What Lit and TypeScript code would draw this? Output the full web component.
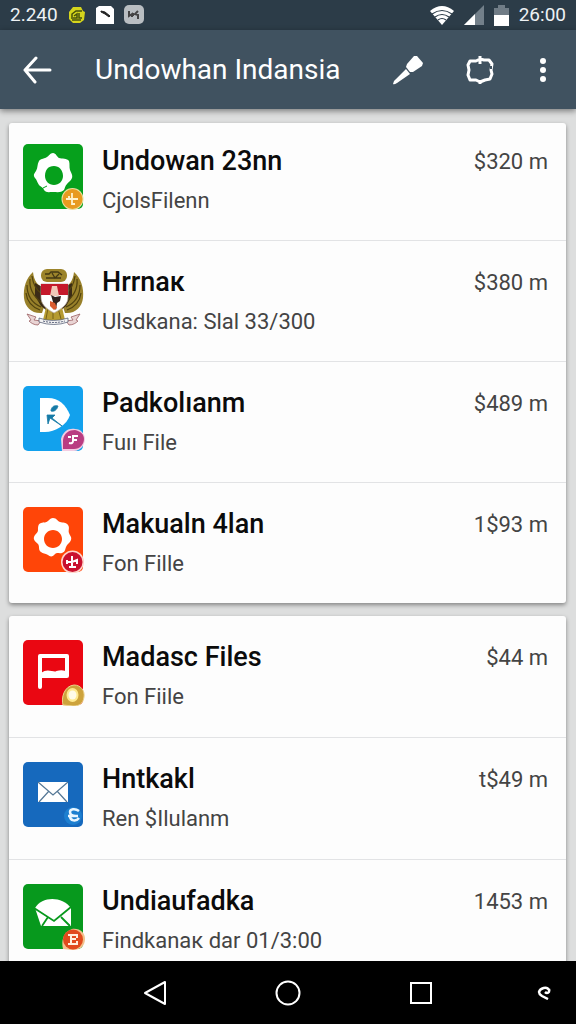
import { LitElement, html, svg, css } from "lit";
import { customElement, property } from "lit/decorators.js";

interface Item {
  icon: string;
  title: string;
  detail: string;
  amount: string;
}

const RECENT: Item[] = [
  { icon: "flower", title: "Undowan 23nn", detail: "CjolsFilenn", amount: "$320 m" },
  { icon: "emblem", title: "Hrrnaк", detail: "Ulsdkana: Slal 33/300", amount: "$380 m" },
  { icon: "play", title: "Padkolıanm", detail: "Fuıı File", amount: "$489 m" },
  { icon: "gear", title: "Makualn 4lan", detail: "Fon Fille", amount: "1$93 m" },
];

const FILES: Item[] = [
  { icon: "flag", title: "Madasc Files", detail: "Fon Fiile", amount: "$44 m" },
  { icon: "mail", title: "Hntkakl", detail: "Ren $Ilulanm", amount: "t$49 m" },
  { icon: "open-mail", title: "Undiaufadka", detail: "Findkanaк dar 01/3:00", amount: "1453 m" },
];

const tile = (fill: string) => svg`<rect width="60" height="65" rx="5" fill=${fill} />`;

const wing = svg`
  <path d="M10 4C3 10 0 20 1 30c1 9 8 16 18 15l3-9-2-17c-5-1-9-6-10-15z" fill="#98802a" />
  <path d="M12 15l9 5 2 22-5-4-6-10z" fill="#3b2b17" />
  <path d="M7 11c-1 10 4 18 12 24M4 17c0 10 5 18 14 22M3 25c1 8 6 14 14 17M9 8c1 8 4 14 10 18" fill="none" stroke="#51420f" stroke-width="1.2" />
  <path d="M4 46l9 3-2 3 7 1-3 4c-4 0-7-2-9-4l2-1z" fill="#e9d4d4" stroke="#9b6062" stroke-width=".8" />`;

const ART: Record<string, unknown> = {
  flower: svg`${tile("#06a01c")}
    <path d="M30 9C33 9 34 13 36 14C39 15 44 14 46 17C47 20 46 23 47 26C48 29 50 31 49 34C48 37 45 38 44 40C42 42 42 44 41 46C38 49 34 48 30 48C26 48 23 49 21 46C20 43 18 43 16 41C14 38 14 36 12 34C10 31 11 30 13 27C15 24 14 20 16 17C18 14 22 15 24 13C26 12 27 9 30 9zM31 22C25 22 22 26 22 32C22 37 26 41 31 41C36 41 40 37 40 32C40 26 36 22 31 22z" fill="#fff" fill-rule="evenodd" />
    <path d="M20 44l4-2" fill="none" stroke="#06a01c" />
    <circle cx="49.500" cy="55" r="11" fill="#eadf9f" /><circle cx="49.500" cy="55" r="10" fill="#e89b20" />
    <path d="M49 49v11h3M43 55h12M46 52v3" fill="none" stroke="#fff3cd" stroke-width="1.800" />`,
  emblem: svg`<g transform="translate(0 3)">${wing}<g transform="translate(61 0) scale(-1 1)">${wing}</g>
    <path d="M24 35h14l4 17H20z" fill="#b69b32" />
    <path d="M25 40l-2 11M30 41v10M35 40l3 11" stroke="#756018" />
    <rect x="18" y="1" width="26" height="13" rx="6" fill="#9c842b" />
    <path d="M22 6h4l2-2h7l4 3M23 10h15M29 5l3 5 4-4" fill="none" stroke="#443914" stroke-width="1.300" />
    <path d="M18 16h27v13c0 7-5 11-14 16-9-5-13-9-13-16z" fill="#fff" stroke="#b9aaa0" stroke-width=".7" />
    <path d="M18 16h27v11H18z" fill="#c5192b" />
    <path d="M29 18h5l2 10h-9z" fill="#f2c8b9" /><path d="M28 27l4 2 6-1-1 5-3 2-1 7-3-4-3-1 3-3z" fill="#30211e" />
    <path d="M27 33l5 2 2 5-3 2-4-4z" fill="#d95b31" />
    <path d="M16 50q14 5 29 0v4q-14 5-29 0z" fill="#f4f4f4" stroke="#46506a" stroke-width=".7" />
    <path d="M20 53q11 3 22 0" fill="none" stroke="#59617b" stroke-dasharray="2 1" /></g>`,
  play: svg`${tile("#12a1ed")}
    <path d="M17 12h8c11 0 18 7 22 17-3 10-15 17-25 17h-5z" fill="#fff" />
    <path d="M24 29h8l-3 3 10 8-12-8-2 6zM28 24c1-4 4-5 7-4-1 4-4 6-7 5z" fill="#167ba7" stroke="#167ba7" stroke-width=".8" />
    <path d="M38 53c2-8 8-11 14-10 6 0 10 5 10 10s-4 12-11 12H39z" fill="#f3cce2" />
    <path d="M40 54c1-7 6-10 12-10 5 1 9 4 9 9s-4 10-10 10H40z" fill="#b93d82" />
    <path d="M55 50h-5v5q0 3-4 2M45 51h3M50 54h4" fill="none" stroke="#fff" stroke-width="2" />`,
  gear: svg`${tile("#ff4508")}
    <path d="M30 11c4 0 4 3 7 4s6 0 8 3 0 5 1 8 3 4 2 7-4 4-5 7-1 5-4 6-5-1-7 1c-2 3-5 3-7 1-3-2-5-1-7-3-3-2-1-5-3-8-2-2-5-4-4-7s4-4 4-7 0-6 3-7 5 0 7-2 3-3 5-3zm0 12c-5 0-9 4-9 9s4 9 9 9 9-4 9-9-4-9-9-9z" fill="#fff" fill-rule="evenodd" />
    <circle cx="49.500" cy="55" r="11.500" fill="#ffd3ca" /><circle cx="49.500" cy="55" r="10" fill="#c9112f" />
    <path d="M49 49v10M46 60h7M44 53v4M44 55h5l5-2v4" fill="none" stroke="#fff" stroke-width="2" />`,
  flag: svg`${tile("#ea0712")}
    <path d="M17 47V16h27v20H19M20 34c5-4 10 1 14-1 3-1 6-2 9 1" fill="none" stroke="#fff" stroke-width="4" stroke-linejoin="round" stroke-linecap="round" />
    <path d="M40 65c-2-7 1-19 11-20 7 0 11 6 10 12-1 7-5 9-11 9z" fill="#cda33c" stroke="#ecd18b" />
    <ellipse cx="49.500" cy="55" rx="6" ry="7" fill="#ffe98e" /><ellipse cx="49.500" cy="55" rx="4" ry="4.500" fill="#fffbe8" />`,
  mail: svg`${tile("#1669bd")}
    <path d="M15 20h30v20H15z" fill="#fff" />
    <path d="M15 20l15 13 15-13M16 40l10-11M44 40L34 29" fill="none" stroke="#547795" stroke-width="1.200" />
    <circle cx="50" cy="54" r="9" fill="#1d7fd0" />
    <path d="M56 49c-4-3-9-2-9 1s2 4 6 4M45 54h10M47 54c0 5 6 6 9 2" fill="none" stroke="#eaf6ff" stroke-width="2.500" />`,
  "open-mail": svg`${tile("#07991d")}
    <path d="M12 24c7-12 27-12 36 0v18H18z" fill="#fff" />
    <path d="M11 24l20 13 17-14M19 42l6-9M47 42l-9-9" fill="none" stroke="#07991d" stroke-width="1.800" />
    <path d="M40 65c-2-8 0-17 9-20 8-1 13 4 13 10 0 7-5 11-12 11z" fill="#f3c18c" />
    <circle cx="50" cy="55.500" r="10" fill="#e14b1d" />
    <path d="M45 51h9v3M45 60h9v-3M48 51v9M48 55h5" fill="none" stroke="#fff0dd" stroke-width="2" />`,
};

@customElement("item-row")
export class ItemRow extends LitElement {
  @property({ attribute: false }) item!: Item;

  static styles = css`
    :host { display: block; }
    .link {
      display: grid;
      grid-template-columns: 62px minmax(0, 1fr) auto;
      column-gap: 17px;
      color: inherit;
      text-decoration: none;
    }
    .icon { display: block; width: 62px; height: 66px; }
    .texts { display: grid; row-gap: 10px; align-content: start; }
    .title { font-size: 27px; line-height: 34px; font-weight: 500; color: #0b0b0b; white-space: nowrap; }
    .detail { font-size: 22px; line-height: 26px; color: #444; white-space: nowrap; }
    .amount { font-size: 22px; line-height: 36px; color: #444; white-space: nowrap; }
  `;

  render() {
    const { icon, title, detail, amount } = this.item;
    return html`<a class="link" href="#">
      <svg class="icon" viewBox="0 0 62 66" aria-hidden="true">${ART[icon]}</svg>
      <span class="texts"><span class="title">${title}</span><span class="detail">${detail}</span></span>
      <span class="amount">${amount}</span>
    </a>`;
  }
}

@customElement("app-root")
export class AppRoot extends LitElement {
  static styles = css`
    :host {
      display: flex;
      flex-direction: column;
      height: 100vh;
      background: #dddede;
      font-family: Roboto, "Noto Sans", sans-serif;
    }
    .status {
      display: flex;
      align-items: center;
      flex: none;
      height: 30px;
      padding: 0 10px;
      background: #2c3c48;
      color: #eef2f4;
      font-size: 19px;
      line-height: 28px;
    }
    .notices, .signals { display: flex; align-items: center; }
    .notices { gap: 10px; margin-right: auto; }
    .signals { gap: 10px; }
    .bar {
      display: flex;
      align-items: center;
      flex: none;
      height: 79px;
      padding: 0 8px 0 12px;
      background: #405260;
      color: #fff;
      box-shadow: 0 2px 6px rgba(0, 0, 0, 0.45);
      z-index: 1;
    }
    .heading { flex: 1; margin: 0 0 0 33px; font-size: 28px; line-height: 36px; font-weight: 400; white-space: nowrap; }
    button { display: grid; place-items: center; padding: 0; border: 0; background: none; color: inherit; }
    .tool { width: 50px; height: 48px; }
    .actions { display: flex; gap: 22px; }
    .more { width: 50px; margin-left: -9px; }
    svg { display: block; }
    .content { flex: 1; min-height: 0; overflow-y: auto; scrollbar-width: none; padding: 14px 10px 0 9px; }
    .card {
      margin: 0 0 13px;
      padding: 0;
      list-style: none;
      background: #fdfdfd;
      border-radius: 3px;
      box-shadow: 0 2px 4px rgba(0, 0, 0, 0.4);
    }
    .row { padding: 24px 18px 26px 14px; border-bottom: 1px solid #e2e3e5; }
    .files .row { padding-bottom: 27px; }
    .row:last-child { border-bottom: 0; }
    .recent .row:first-child { padding-top: 21px; }
    .nav {
      display: grid;
      grid-template-columns: 88px repeat(3, 1fr) 25px 64px;
      flex: none;
      height: 63px;
      background: #000;
      color: #fff;
    }
    .nav button:first-child { grid-column: 2; }
    .nav button:last-child { grid-column: 6; }
  `;

  private card(items: Item[], name: string) {
    return html`<ul class="card ${name}">
      ${items.map((item) => html`<li class="row"><item-row .item=${item}></item-row></li>`)}
    </ul>`;
  }

  render() {
    return html`
      <div class="status">
        <div class="notices">
          <span>2.240</span>
          <svg width="18" height="18" viewBox="0 0 18 18"><path d="M5 1h8l2 4 2 1-1 8-4 3H5l-4-4V6z" fill="#d5d51c" /><path d="M4 13V8l4-3h6M5 12h4V8L6 10M11 7v5h3M4 14h9" fill="none" stroke="#46500b" stroke-width="1.500" /></svg>
          <svg width="18" height="18" viewBox="0 0 18 18"><path d="M3 0h12l3 3v15H0V2z" fill="#fff" /><path d="M5 5l4 1 5 4-1 1-4-3-4-2z" fill="#222" stroke="#222" /></svg>
          <svg width="20" height="20" viewBox="0 0 20 20"><rect width="20" height="19" rx="5" fill="#b9bec2" /><path d="M5 6v5l3-2v3M9 8v3M14 6l-3 3 3 1v4" fill="none" stroke="#444" stroke-width="2" /></svg>
        </div>
        <div class="signals">
          <svg width="24" height="19" viewBox="0 0 24 19"><path d="M0 5Q12-5 24 5L12 19z" fill="#fff" /><path d="M2 8q10-7 20 0M5 11q7-5 14 0M8 14q4-3 8 0" fill="none" stroke="#2c3c48" stroke-width="1.200" /></svg>
          <svg width="20" height="20" viewBox="0 0 20 20"><path d="M20 0v20H0z" fill="#73808a" /><path d="M11 9v11H0z" fill="#fff" /></svg>
          <svg width="15" height="21" viewBox="4 0 15 21"><path d="M4 3h4V0h7v3h4v8H4z" fill="#707c86" /><path d="M4 10h15v11H4z" fill="#fff" /></svg>
          <span>26:00</span>
        </div>
      </div>
      <header class="bar">
        <button class="tool" aria-label="Back">
          <svg width="30" height="28" viewBox="0 0 30 28"><path d="M14 2L3 14l10 12M3 14h25" fill="none" stroke="#fff" stroke-width="3" stroke-linecap="round" stroke-linejoin="round" /></svg>
        </button>
        <h1 class="heading">Undowhan Indansia</h1>
        <div class="actions">
          <button class="tool" aria-label="Edit">
            <svg width="32" height="30" viewBox="0 0 32 30"><path d="M22 1l3 0 6 7-1 3-9 6-3 0-4-5 1-3z" fill="#fff" /><path d="M14 14l4 5L5 28q-3 2-4 1 0-3 3-5z" fill="#fff" /></svg>
          </button>
          <button class="tool" aria-label="Sync">
            <svg width="28" height="30" viewBox="0 0 28 30"><path d="M14 4l-4 2-6 0-2 4 1 5-1 5 2 5 6 0 4 2 5-2 5-1 2-5-1-4 1-6-3-4-5 0zM14 1v8M14 25v4" fill="none" stroke="#fff" stroke-width="3" stroke-linejoin="round" /><path d="M25 11v3" stroke="#405260" stroke-width="2" /></svg>
          </button>
          <button class="tool more" aria-label="More options">
            <svg width="8" height="24" viewBox="0 0 8 24" fill="#fff"><circle cx="4" cy="3" r="3" /><circle cx="4" cy="12" r="3" /><circle cx="4" cy="21" r="3" /></svg>
          </button>
        </div>
      </header>
      <main class="content">
        ${this.card(RECENT, "recent")} ${this.card(FILES, "files")}
      </main>
      <nav class="nav">
        <button aria-label="Back"><svg width="24" height="26" viewBox="0 0 24 26"><path d="M22 2v22L2 13z" fill="none" stroke="#fff" stroke-width="2" stroke-linejoin="round" /></svg></button>
        <button aria-label="Home"><svg width="26" height="26" viewBox="0 0 26 26"><circle cx="13" cy="13" r="11.500" fill="none" stroke="#fff" stroke-width="2" /></svg></button>
        <button aria-label="Overview"><svg width="24" height="24" viewBox="0 0 24 24"><rect x="2" y="2" width="20" height="20" fill="none" stroke="#fff" stroke-width="2" /></svg></button>
        <button aria-label="Rotate"><svg width="14" height="14" viewBox="0 0 14 14"><path d="M12 4C10 0 3 2 2 6q0 2 3 4l6 3M12 3c1 4-2 5-4 3" fill="none" stroke="#fff" stroke-width="2.500" /></svg></button>
      </nav>
    `;
  }
}
